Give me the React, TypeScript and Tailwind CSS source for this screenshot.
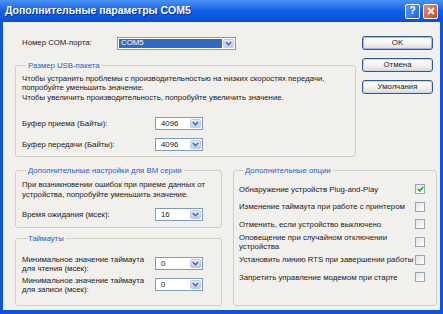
import React from "react";

const Chevron = () => (
  <svg width="7" height="5" viewBox="0 0 7 5">
    <path d="M0.8 1 L3.5 3.8 L6.2 1" fill="none" stroke="#4D6185" strokeWidth="1.4" />
  </svg>
);

function Select({ value, wide }: { value: string; wide?: boolean }) {
  return (
    <div
      className={`flex h-[13px] items-stretch border border-[#7F9DB9] bg-white p-px ${
        wide ? "w-[119px]" : "w-[48px]"
      }`}
    >
      <div
        className={`flex flex-1 items-center pl-[2px] leading-none ${
          wide ? "mr-px bg-[#316AC5] text-white" : "pl-[4px]"
        }`}
      >
        {value}
      </div>
      <div className="flex w-[11px] items-center justify-center rounded-[2px] border border-[#B9CBF3] bg-gradient-to-b from-[#E6EEFD] to-[#B9CCF5]">
        <Chevron />
      </div>
    </div>
  );
}

function Button({ label, primary }: { label: string; primary?: boolean }) {
  return (
    <div
      className={`flex h-[14px] w-[71px] items-center justify-center rounded-[3px] border border-[#2E5A96] bg-gradient-to-b from-white via-[#F5F4EF] to-[#DDDBD2] leading-none ${
        primary ? "shadow-[inset_0_0_0_1px_#9DBBEA]" : "shadow-[inset_0_0_0_1px_#C9D8F2]"
      }`}
    >
      {label}
    </div>
  );
}

function Group({
  title,
  className,
  children,
}: {
  title: string;
  className: string;
  children: React.ReactNode;
}) {
  return (
    <fieldset className={`rounded-[3px] border border-[#D0D0BF] ${className}`}>
      <legend className="ml-[4px] px-[2px] leading-[9px] text-[#2B5CCB]">{title}</legend>
      {children}
    </fieldset>
  );
}

function Check({ checked }: { checked?: boolean }) {
  return (
    <div className="flex h-[10px] w-[10px] shrink-0 items-center justify-center border border-[#9AA6B8] bg-gradient-to-br from-[#E3E3DE] to-white">
      {checked && (
        <svg width="7" height="6" viewBox="0 0 7 6">
          <path d="M0.8 3 L2.7 4.8 L6.2 1" fill="none" stroke="#21A121" strokeWidth="1.6" />
        </svg>
      )}
    </div>
  );
}

const options: { text: React.ReactNode; checked?: boolean }[] = [
  { text: "Обнаружение устройств Plug-and-Play", checked: true },
  { text: "Изменение таймаута при работе с принтером" },
  { text: "Отменить, если устройство выключено" },
  {
    text: (
      <>
        Оповещение при случайном отключении
        <br />
        устройства
      </>
    ),
  },
  { text: "Установить линию RTS при завершении работы" },
  { text: "Запретить управление модемом при старте" },
];

export default function App() {
  return (
    <div className="flex h-[314px] w-[443px] flex-col bg-[#0B55E0] font-['Liberation_Sans',Arial,sans-serif] text-[7.8px] text-[#1A1A1A]">
      <div className="flex h-[22px] shrink-0 items-center bg-gradient-to-b from-[#4A92F5] via-[#0F5FE8] to-[#0A4FD6] pl-[5px] pr-[5px]">
        <span className="text-[10.5px] font-bold text-white [text-shadow:1px_1px_0_#0A2F8F]">
          Дополнительные параметры COM5
        </span>
        <div className="ml-auto flex gap-[3px]">
          <div className="flex h-[15px] w-[15px] items-center justify-center rounded-[2px] border border-white bg-gradient-to-br from-[#5D9CF8] to-[#1F5EE0] text-[10px] font-bold leading-none text-white">
            ?
          </div>
          <div className="flex h-[15px] w-[15px] items-center justify-center rounded-[2px] border border-white bg-gradient-to-br from-[#EC8A6A] to-[#D4441C]">
            <svg width="8" height="8" viewBox="0 0 8 8">
              <path d="M1 1 L7 7 M7 1 L1 7" stroke="white" strokeWidth="1.8" />
            </svg>
          </div>
        </div>
      </div>

      <div className="mx-[3px] mb-[4px] flex-1 bg-[#F1F0EC] pl-[12px] pt-[14px]">
        <div className="flex items-start">
          <div className="flex w-[341px] flex-col">
            <div className="flex h-[14px] items-center pl-[7px]">
              <span className="w-[95px]">Номер COM-порта:</span>
              <Select value="COM5" wide />
            </div>
            <Group title="Размер USB-пакета" className="mt-[11px] px-[6px] pb-[5px] pt-[3.5px]">
              <div className="leading-[9.5px]">
                <div>Чтобы устранить проблемы с производительностью на низких скоростях передачи,</div>
                <div>попробуйте уменьшить значение.</div>
                <div>Чтобы увеличить производительность, попробуйте увеличить значение.</div>
              </div>
              <div className="mt-[15px] flex items-center">
                <span className="w-[133px]">Буфер приема (Байты):</span>
                <Select value="4096" />
              </div>
              <div className="mt-[8px] flex items-center">
                <span className="w-[133px]">Буфер передачи (Байты):</span>
                <Select value="4096" />
              </div>
            </Group>
          </div>
          <div className="ml-[6px] flex flex-col gap-[8px]">
            <Button label="OK" primary />
            <Button label="Отмена" />
            <Button label="Умолчания" />
          </div>
        </div>

        <div className="mt-[8.5px] flex gap-[11px]">
          <div className="flex w-[207px] flex-col">
            <Group title="Дополнительные настройки для BM серии" className="px-[6px] pb-[6px] pt-[5.5px]">
              <div className="leading-[9.5px]">
                <div>При возникновении ошибок при приеме данных от</div>
                <div>устройства, попробуйте уменьшить значение.</div>
              </div>
              <div className="mt-[9px] flex items-center">
                <span className="w-[133px]">Время ожидания (мсек):</span>
                <Select value="16" />
              </div>
            </Group>
            <Group title="Таймауты" className="mt-[6px] px-[6px] pb-[11px] pt-[11.5px]">
              <div className="flex items-center">
                <span className="w-[133px] leading-[9px]">
                  Минимальное значение таймаута
                  <br />
                  для чтения (мсек):
                </span>
                <Select value="0" />
              </div>
              <div className="mt-[3px] flex items-center">
                <span className="w-[133px] leading-[9px]">
                  Минимальное значение таймаута
                  <br />
                  для записи (мсек):
                </span>
                <Select value="0" />
              </div>
            </Group>
          </div>
          <Group title="Дополнительные опции" className="w-[199px] pl-[5px] pr-[11px] pt-[6px]">
            {options.map((o, i) => (
              <div key={i} className="flex h-[17.6px] items-center justify-between gap-[2px] leading-[9px]">
                <span className="whitespace-nowrap">{o.text}</span>
                <Check checked={o.checked} />
              </div>
            ))}
          </Group>
        </div>
      </div>
    </div>
  );
}
